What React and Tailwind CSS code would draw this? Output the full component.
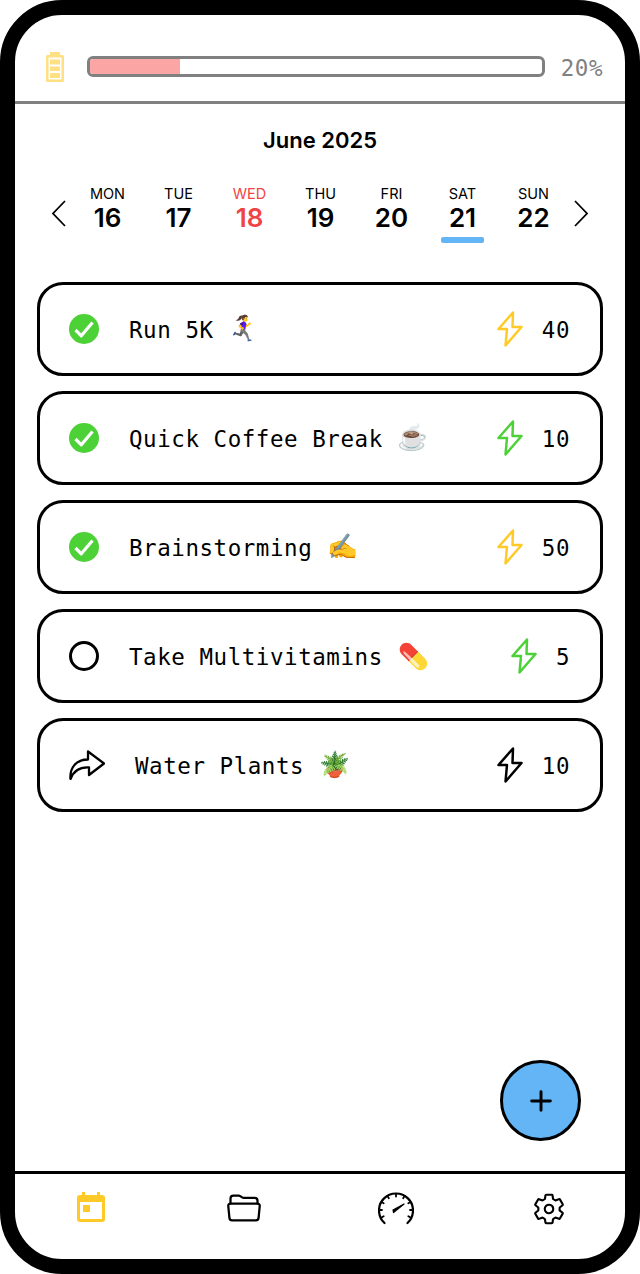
import { Plus } from "lucide-react";
import { IoFolderOpenOutline, IoSettingsOutline } from "react-icons/io5";

const days = [
    { label: "MON", num: 16 },
    { label: "TUE", num: 17 },
    { label: "WED", num: 18, today: true },
    { label: "THU", num: 19 },
    { label: "FRI", num: 20 },
    { label: "SAT", num: 21, selected: true },
    { label: "SUN", num: 22 },
];

const tasks = [
    { name: "Run 5K", emoji: "🏃‍♀️‍➡️", state: "done", bolt: "text-[#ffca28]", points: 40 },
    { name: "Quick Coffee Break", emoji: "☕", state: "done", bolt: "text-[#4cd137]", points: 10 },
    { name: "Brainstorming", emoji: "✍️", state: "done", bolt: "text-[#ffca28]", points: 50 },
    { name: "Take Multivitamins", emoji: "💊", emojiClass: "rotate-180", state: "open", bolt: "text-[#4cd137]", points: 5 },
    { name: "Water Plants", emoji: "🪴", state: "skip", bolt: "text-black", points: 10 },
];

const Bolt = ({ className }) => (
    <svg viewBox="0 0 26 36" className={`w-[26px] h-[36px] ${className}`} fill="none" stroke="currentColor" strokeWidth="2.5" strokeLinejoin="round">
        <path d="M16 1.5 L1.5 18 H10 L8.5 34.5 L24.5 16 H15.5 Z" />
    </svg>
);

const CheckDone = () => (
    <svg viewBox="0 0 30 30" className="w-[30px] h-[30px] shrink-0">
        <circle cx="15" cy="15" r="15" fill="#4cd137" />
        <path d="M6.5 16 L12.3 21.8 L23.5 8.5" fill="none" stroke="white" strokeWidth="3.2" strokeLinejoin="round" />
    </svg>
);

const ShareArrow = () => (
    <svg viewBox="0 0 36 30" className="w-[36px] h-[30px] shrink-0" fill="none" stroke="black" strokeWidth="2.3" strokeLinejoin="round">
        <path d="M1.5 29 C0.5 18 7 9.5 19 9.5 V1.5 L35 13.5 L20 25 V17.5 C11 17 5 20 1.5 29 Z" />
    </svg>
);

const BatteryIcon = () => (
    <svg viewBox="0 0 18 30" className="w-[18px] h-[30px] shrink-0 text-[#ffe082]" fill="currentColor">
        <path d="M4 0 H14 V3 H16.5 A1.5 1.5 0 0 1 18 4.5 V28.5 A1.5 1.5 0 0 1 16.5 30 H1.5 A1.5 1.5 0 0 1 0 28.5 V4.5 A1.5 1.5 0 0 1 1.5 3 H4 Z M2.5 5.5 V27.5 H15.5 V5.5 Z" fillRule="evenodd" />
        <rect x="4" y="7.5" width="10" height="5" />
        <rect x="4" y="14.5" width="10" height="4.5" />
        <rect x="4" y="21" width="10" height="5" />
    </svg>
);

const CalendarIcon = () => (
    <svg viewBox="0 0 28 30" className="w-[28px] h-[30px] text-[#ffca28]" fill="currentColor">
        <path d="M5 0 H8 V3 H20 V0 H23 V3 H25 A3 3 0 0 1 28 6 V27 A3 3 0 0 1 25 30 H3 A3 3 0 0 1 0 27 V6 A3 3 0 0 1 3 3 H5 Z M3 10 V27 H25 V10 Z" fillRule="evenodd" />
        <rect x="6" y="13" width="7" height="7" />
    </svg>
);

const GaugeIcon = () => (
    <svg viewBox="0 0 36 34" className="w-[36px] h-[34px]" fill="none" stroke="black" strokeWidth="2.2" strokeLinecap="round">
        <path d="M6.5 31 A17 17 0 1 1 29.5 31" />
        <path d="M18 2 V4.5 M9.5 4 L10.8 6.2 M3.5 10 L5.7 11.3 M1.5 18 H4 M3.5 25.5 L5.7 24.2 M26.5 4 L25.2 6.2 M32.5 10 L30.3 11.3 M34.5 18 H32 M32.5 25.5 L30.3 24.2" strokeWidth="1.8" />
        <path d="M15.5 20.5 L15 18 L26 12 Z" fill="black" stroke="black" strokeWidth="1.2" strokeLinejoin="round" />
    </svg>
);

const TaskRow = ({ task }) => (
    <div className="h-[94px] border-[3px] border-black rounded-[26px] pl-[29px] pr-[30px] flex items-center">
        {task.state === "done" && <CheckDone />}
        {task.state === "open" && <div className="w-[30px] h-[30px] shrink-0 rounded-full border-[3px] border-black"></div>}
        {task.state === "skip" && <ShareArrow />}
        <span className="ml-[30px] pt-[3px] text-[22.5px] tracking-[0.55px] text-black">{task.name}</span>
        <span className={`ml-[15px] text-[25px] font-['Noto_Color_Emoji',sans-serif] ${task.emojiClass || ""}`}>{task.emoji}</span>
        <div className="ml-auto flex items-center gap-[19px]">
            <Bolt className={task.bolt} />
            <span className="pt-[3px] text-[22.5px] tracking-[0.55px] text-black">{task.points}</span>
        </div>
    </div>
);

const App = () => {
    return (
        <div className="relative w-[640px] h-[1274px] bg-white">
            <div className="relative w-full h-full border-[15px] border-black rounded-[62px] flex flex-col overflow-hidden font-['DejaVu_Sans_Mono',monospace]">
                <div className="h-[89px] shrink-0 border-b-[3px] border-[#808080] pl-[31px] pr-[22px] pt-[37px] flex items-start">
                    <BatteryIcon />
                    <div className="ml-[23px] mt-[4px] flex-1 h-[21px] border-[3px] border-[#808080] rounded-[6px] overflow-hidden">
                        <div className="w-[20%] h-full bg-[#fca5a5]"></div>
                    </div>
                    <span className="ml-[16px] mt-[1px] text-[22.5px] tracking-[0.55px] leading-[30px] text-[#808080]">20%</span>
                </div>

                <div className="flex-1 font-['Inter',sans-serif]">
                    <h1 className="mt-[21px] text-center text-[22px] leading-[30px] font-semibold text-black">June 2025</h1>
                    <div className="mt-[30px] pl-[36px] flex items-start">
                        <svg viewBox="0 0 15 27" className="mt-[15px] w-[15px] h-[27px] shrink-0" fill="none" stroke="black" strokeWidth="1.8">
                            <path d="M14 1 L2 13.5 L14 26" />
                        </svg>
                        <div className="ml-[6px] w-[497px] grid grid-cols-7">
                            {days.map((day) => (
                                <div key={day.label} className={`flex flex-col items-center ${day.today ? "text-[#ef4444]" : "text-black"}`}>
                                    <span className="text-[14.5px] leading-[18px]">{day.label}</span>
                                    <span className="text-[26px] leading-[30px] font-semibold">{day.num}</span>
                                    {day.selected && <div className="mt-[4px] w-[43px] h-[6px] rounded-[2px] bg-[#64b5f6]"></div>}
                                </div>
                            ))}
                        </div>
                        <svg viewBox="0 0 15 27" className="mt-[15px] ml-[5px] w-[15px] h-[27px] shrink-0" fill="none" stroke="black" strokeWidth="1.8">
                            <path d="M1 1 L13 13.5 L1 26" />
                        </svg>
                    </div>

                    <div className="mt-[39px] mx-[22px] flex flex-col gap-[15px] font-['DejaVu_Sans_Mono',monospace]">
                        {tasks.map((task) => <TaskRow key={task.name} task={task} />)}
                    </div>
                </div>

                <div className="h-[88px] shrink-0 border-t-[3px] border-black grid grid-cols-4 items-start pt-[18px]">
                    <div className="flex justify-center"><CalendarIcon /></div>
                    <div className="flex justify-center"><IoFolderOpenOutline className="w-[36px] h-[36px] -mt-[2px]" /></div>
                    <div className="flex justify-center"><GaugeIcon /></div>
                    <div className="flex justify-center"><IoSettingsOutline className="w-[34px] h-[34px]" /></div>
                </div>

                <button className="absolute right-[44px] bottom-[118px] w-[81px] h-[81px] rounded-full border-[3px] border-black bg-[#64b5f6] flex items-center justify-center">
                    <Plus className="w-[32px] h-[32px]" strokeWidth={2.2} />
                </button>
            </div>
        </div>
    );
};

export default App;
